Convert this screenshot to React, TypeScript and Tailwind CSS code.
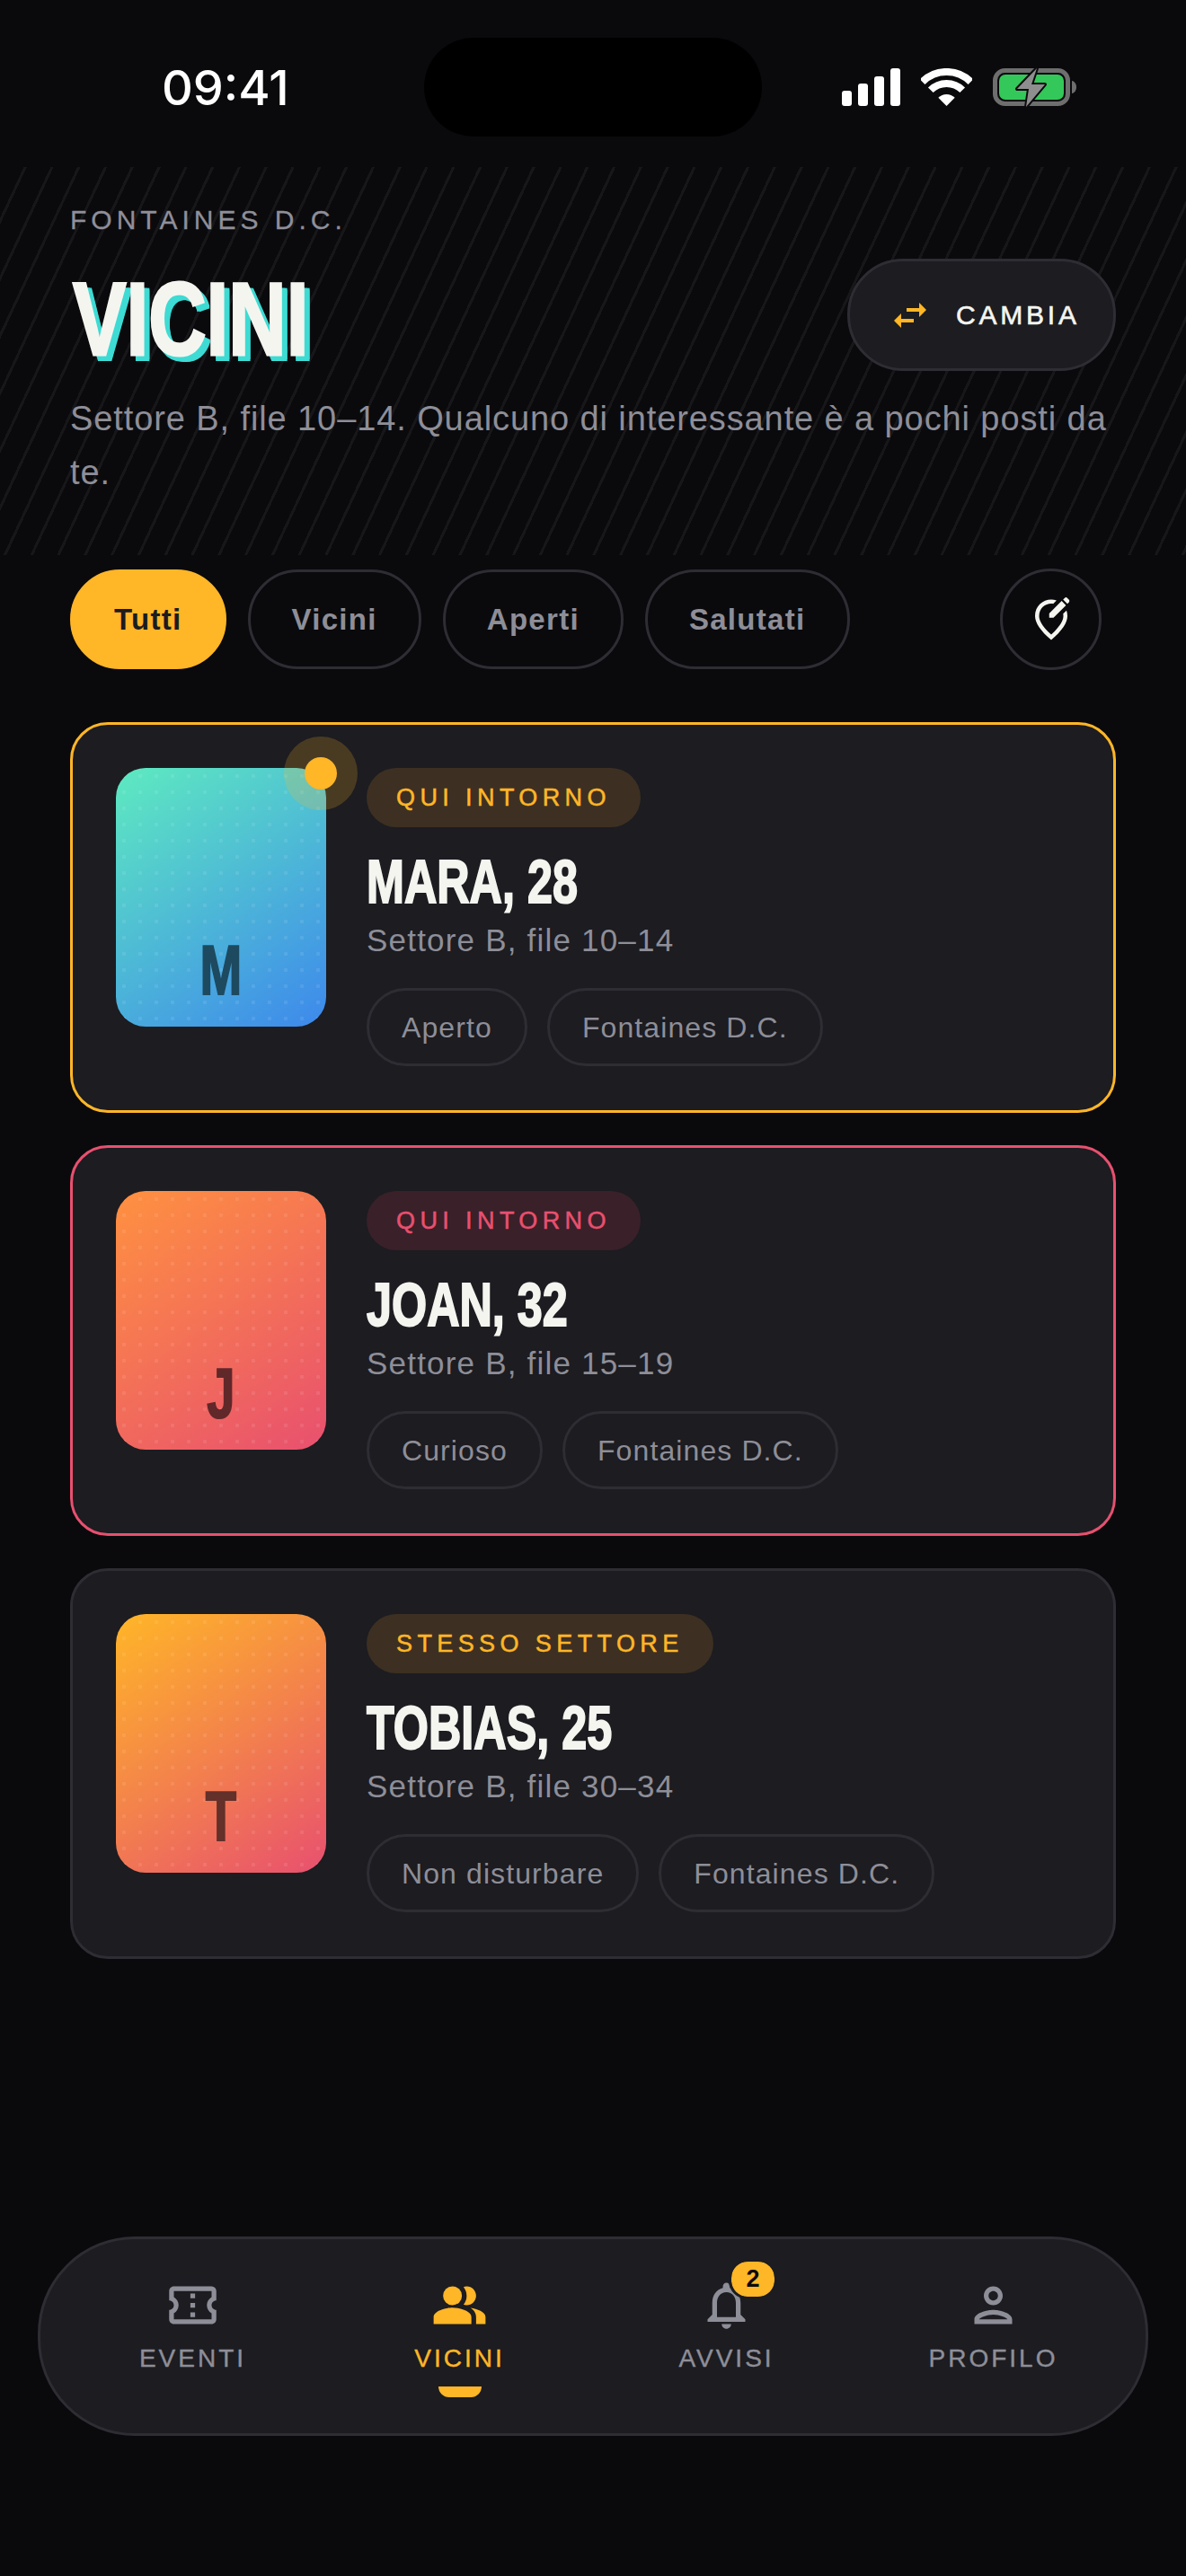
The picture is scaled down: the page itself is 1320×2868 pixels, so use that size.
import {
  MdOutlineConfirmationNumber,
  MdOutlineEditLocationAlt,
  MdOutlineNotifications,
  MdOutlinePerson,
  MdPeopleAlt,
  MdSwapHoriz,
} from "react-icons/md";

const people = [
  {
    name: "MARA, 28",
    seat: "Settore B, file 10–14",
    badge: "QUI INTORNO",
    letter: "M",
    tags: ["Aperto", "Fontaines D.C."],
    card: "border-[#ffb627]",
    badgeTone: "bg-[#3d3022] text-[#ffb627] [-webkit-text-stroke:0.5px_#ffb627]",
    avatar: "bg-linear-[145deg] from-[#5eeac0] to-[#3d88ec]",
    letterTone: "text-[#1e4a60]",
    live: true,
  },
  {
    name: "JOAN, 32",
    seat: "Settore B, file 15–19",
    badge: "QUI INTORNO",
    letter: "J",
    tags: ["Curioso", "Fontaines D.C."],
    card: "border-[#e8506f]",
    badgeTone: "bg-[#3a2029] text-[#e8506f] [-webkit-text-stroke:0.5px_#e8506f]",
    avatar: "bg-linear-[145deg] from-[#ff9140] to-[#e8506f]",
    letterTone: "text-[#61282a]",
    live: false,
  },
  {
    name: "TOBIAS, 25",
    seat: "Settore B, file 30–34",
    badge: "STESSO SETTORE",
    letter: "T",
    tags: ["Non disturbare", "Fontaines D.C."],
    card: "border-[#2d2d33]",
    badgeTone: "bg-[#3d3022] text-[#ffb627] [-webkit-text-stroke:0.5px_#ffb627]",
    avatar: "bg-linear-[145deg] from-[#ffb627] to-[#e8506f]",
    letterTone: "text-[#63302a]",
    live: false,
  },
];

const filters = ["Tutti", "Vicini", "Aperti", "Salutati"];

function StatusBar() {
  return (
    <div className="flex h-[186px] shrink-0 items-start pt-[42px]">
      <div className="flex h-[110px] w-[472px] shrink-0 items-center pl-[180px] font-['Inter',sans-serif] text-[54px] font-medium text-white">09:41</div>
      <div className="h-[110px] w-[376px] rounded-[55px] bg-black" />
      <div className="flex h-[110px] flex-1 items-center justify-end gap-[23px] pr-[122px]">
        <div className="flex h-[42px] items-end gap-[7px]">
          <div className="h-[17px] w-[11px] rounded-[3px] bg-white" />
          <div className="h-[25px] w-[11px] rounded-[3px] bg-white" />
          <div className="h-[33px] w-[11px] rounded-[3px] bg-white" />
          <div className="h-[42px] w-[11px] rounded-[3px] bg-white" />
        </div>
        <svg width="57" height="42" viewBox="0 0 57 42" fill="none">
          <path d="M1.6 15.1A38 38 0 0 1 55.4 15.1" stroke="#fff" strokeWidth="8" />
          <path d="M10.8 24.3A25 25 0 0 1 46.2 24.3" stroke="#fff" strokeWidth="8" />
          <path d="M28.5 42L19.3 32.8A13 13 0 0 1 37.7 32.8Z" fill="#fff" />
        </svg>
        <svg width="93" height="43" viewBox="0 0 93 43" fill="none" className="overflow-visible">
          <rect x="2.5" y="2.5" width="81" height="37" rx="11" stroke="#6e6e6e" strokeWidth="5" />
          <rect x="7" y="7" width="72" height="28" rx="7" fill="#34c759" />
          <path d="M88 14c3 .5 5 3.500 5 7s-2 6.500-5 7z" fill="#6e6e6e" />
          <path
            d="M49 0L27 23H40L37 43L58 18H43Z"
            fill="#8e8e8e"
            stroke="#0b0b0e"
            strokeWidth="4"
            strokeLinejoin="round"
            paintOrder="stroke"
          />
        </svg>
      </div>
    </div>
  );
}

function Header() {
  return (
    <div className="h-[432px] shrink-0 bg-[repeating-linear-gradient(115deg,transparent_0,transparent_24px,rgba(255,255,255,0.055)_24px,rgba(255,255,255,0.055)_27px)] px-[78px] pt-[41px]">
      <div className="h-[36px] text-[30px] leading-[36px] tracking-[5px] text-[#8f8f9a] [-webkit-text-stroke:0.3px_#8f8f9a]">FONTAINES D.C.</div>
      <div className="mt-[25px] flex h-[125px] items-center justify-between">
        <h1 className="mt-[9px] ml-[3px] origin-left scale-x-[0.775] text-[115px] leading-[125px] font-bold text-[#f5f5f0] [-webkit-text-stroke:3px_#f5f5f0] [text-shadow:9px_7px_0_#3ddbd3,6px_7px_0_#3ddbd3,9px_5px_0_#3ddbd3,6px_5px_0_#3ddbd3]">
          VICINI
        </h1>
        <div className="flex h-[125px] w-[299px] items-center gap-[27px] rounded-[62px] border-[3px] border-[#2d2d33] bg-[#1c1c21] pl-[43px]">
          <MdSwapHoriz className="size-[48px] shrink-0 text-[#ffb627]" />
          <span className="text-[30px] tracking-[3.800px] text-[#f5f5f0] [-webkit-text-stroke:0.6px_#f5f5f0]">CAMBIA</span>
        </div>
      </div>
      <p className="mt-[23px] text-[38px] leading-[60px] tracking-[0.900px] text-[#8e8e98]">
        Settore B, file 10–14. Qualcuno di interessante è a pochi posti da te.
      </p>
    </div>
  );
}

function Filters() {
  return (
    <div className="flex shrink-0 items-center justify-between pt-[15px] pr-[94px] pl-[78px]">
      <div className="flex gap-[24px]">
        {filters.map((f, i) => (
          <div
            key={f}
            className={
              i === 0
                ? "flex h-[111px] items-center rounded-[56px] border-[3px] border-[#ffb627] bg-[#ffb627] px-[46px] text-[33px] font-bold tracking-[1.300px] text-[#1c1c21]"
                : "flex h-[111px] items-center rounded-[56px] border-[3px] border-[#2d2d33] px-[46px] text-[33px] font-bold tracking-[1.300px] text-[#8e8e98]"
            }
          >
            {f}
          </div>
        ))}
      </div>
      <div className="flex size-[113px] items-center justify-center rounded-full border-[3px] border-[#2d2d33]">
        <MdOutlineEditLocationAlt className="size-[54px] text-[#f5f5f0]" />
      </div>
    </div>
  );
}

function PersonCard({ p }: { p: (typeof people)[number] }) {
  return (
    <div className={`flex h-[435px] gap-[45px] rounded-[42px] border-[3px] bg-[#1c1c21] p-[48px] ${p.card}`}>
      <div className={`relative h-[288px] w-[234px] shrink-0 rounded-[33px] ${p.avatar}`}>
        <div className="h-full w-full rounded-[33px] bg-[radial-gradient(rgba(255,255,255,0.09)_2px,transparent_2.500px)] bg-size-[18px_18px] pt-[195px] text-center">
          <div className={`scale-x-[0.72] text-[78px] leading-[60px] font-bold ${p.letterTone} [-webkit-text-stroke:2px_currentColor]`}>
            {p.letter}
          </div>
        </div>
        {p.live && (
          <div className="absolute -top-[35px] -right-[35px] flex size-[82px] items-center justify-center rounded-full bg-[#ffb627]/20">
            <div className="size-[36px] rounded-full bg-[#ffb627]" />
          </div>
        )}
      </div>
      <div className="flex min-w-0 flex-col items-start">
        <div className={`flex h-[66px] items-center rounded-[33px] px-[33px] text-[27px] tracking-[5.400px] ${p.badgeTone}`}>
          {p.badge}
        </div>
        <div className="mt-[24px] origin-left scale-x-[0.74] text-[68px] leading-[72px] font-bold whitespace-nowrap text-[#f5f5f0] [-webkit-text-stroke:2px_#f5f5f0]">
          {p.name}
        </div>
        <div className="mt-[9px] text-[35px] leading-[42px] tracking-[1.200px] text-[#8e8e98]">{p.seat}</div>
        <div className="mt-[32px] flex gap-[22px]">
          {p.tags.map((t) => (
            <div key={t} className="flex h-[87px] items-center rounded-[44px] border-[3px] border-[#2d2d33] px-[36px] text-[32px] tracking-[1.100px] text-[#8e8e98]">
              {t}
            </div>
          ))}
        </div>
      </div>
    </div>
  );
}

function NavItem({ label, active, icon, badge, stroke }: { label: string; active?: boolean; icon: React.ReactNode; badge?: string; stroke?: string }) {
  return (
    <div className={`flex flex-col items-center ${active ? "text-[#ffb627]" : "text-[#8e8e98]"}`}>
      <div className="relative flex size-[63px] items-center justify-center">
        {icon}
        {badge && (
          <div className="absolute -top-[17px] left-[37px] flex h-[39px] w-[48px] items-center justify-center rounded-[18px] bg-[#ffb627] text-[27px] font-bold text-[#0a0a0d] outline-[3px] outline-[#1c1c21]">
            {badge}
          </div>
        )}
      </div>
      <div className={`mt-[10px] text-[28px] leading-[36px] tracking-[3px] ${stroke}`}>{label}</div>
      {active && <div className="mt-[13px] h-[12px] w-[48px] rounded-b-[12px] bg-[#ffb627]" />}
    </div>
  );
}

function BottomNav() {
  const mutedStroke = "[-webkit-text-stroke:0.4px_#8e8e98]";
  return (
    <div className="mx-[42px] mt-auto mb-[156px] grid h-[222px] shrink-0 grid-cols-4 rounded-[108px] border-[3px] border-[#2d2d33] bg-[#1c1c21] px-[21px] pt-[42px]">
      <NavItem label="EVENTI" stroke={mutedStroke} icon={<MdOutlineConfirmationNumber className="size-[63px]" />} />
      <NavItem label="VICINI" stroke="[-webkit-text-stroke:0.4px_#ffb627]" active icon={<MdPeopleAlt className="size-[63px]" />} />
      <NavItem label="AVVISI" stroke={mutedStroke} badge="2" icon={<MdOutlineNotifications className="size-[63px]" />} />
      <NavItem label="PROFILO" stroke={mutedStroke} icon={<MdOutlinePerson className="size-[63px]" />} />
    </div>
  );
}

export default function App() {
  return (
    <div className="flex h-[2868px] w-[1320px] flex-col overflow-hidden bg-[#0a0a0d] font-['Liberation_Sans',sans-serif]">
      <StatusBar />
      <Header />
      <Filters />
      <div className="mt-[58px] flex flex-col gap-[36px] px-[78px]">
        {people.map((p) => (
          <PersonCard key={p.name} p={p} />
        ))}
      </div>
      <BottomNav />
    </div>
  );
}
